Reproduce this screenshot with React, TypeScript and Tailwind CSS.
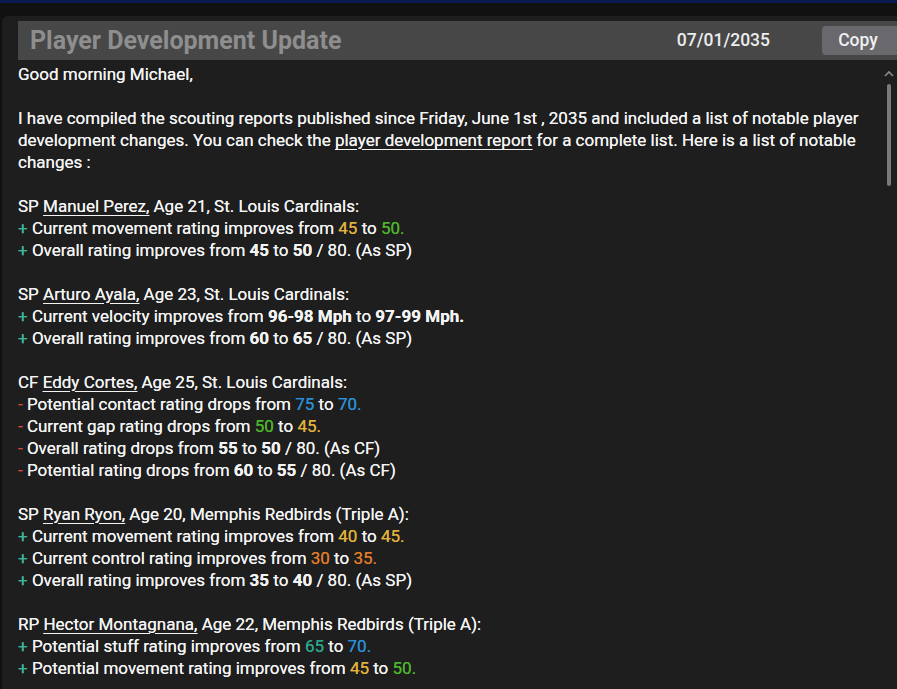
import React from "react";

type Seg = { t: string; c?: string; b?: boolean; u?: boolean };

const C = {
  yel: "text-[#e2b13c]",
  grn: "text-[#4db52b]",
  blu: "text-[#2b90d8]",
  org: "text-[#e27b27]",
  tea: "text-[#2ca68b]",
};

const plus = <span className="text-[#3fb39a]">+ </span>;
const minus = <span className="text-[#d9473a]">- </span>;

const Line = ({ sign, segs }: { sign?: "+" | "-"; segs: Seg[] }) => (
  <div className="h-[22px] whitespace-nowrap">
    {sign === "+" && plus}
    {sign === "-" && minus}
    {segs.map((s, i) => (
      <span
        key={i}
        className={`${s.c ?? ""} ${s.b ? "font-bold" : ""} ${s.u ? "underline underline-offset-[3px]" : ""}`}
      >
        {s.t}
      </span>
    ))}
  </div>
);

const Head = ({ pos, name, rest }: { pos: string; name: string; rest: string }) => (
  <Line segs={[{ t: pos + " " }, { t: name, u: true }, { t: rest }]} />
);

const Gap = () => <div className="h-[22px]" />;

const App = () => {
  return (
    <div className="w-[897px] h-[689px] bg-[#111111] overflow-hidden flex flex-col font-['Roboto',sans-serif]">
      <div className="h-[3px] bg-[#0b1a4e]" />
      <div className="h-[13px]" />
      <div className="relative flex-1 ml-[2px] rounded-tl-[6px] bg-[#1e1e1e] pl-[16px] pt-[5px]">
        <div className="h-[39px] bg-[#474747] flex items-center">
          <div className="pl-[12px] text-[25px] font-bold text-[#8e8e8e]">
            Player Development Update
          </div>
          <div className="ml-auto mr-[52px] text-[17.5px] font-medium text-[#ececec]">07/01/2035</div>
          <div className="w-[80px] h-[29px] mr-[-5px] rounded-[4px] bg-[#68686d] flex items-center justify-center text-[17.5px] font-medium text-[#f0f0f0] pr-[8px]">
            Copy
          </div>
        </div>

        <div className="pt-[3px] w-[860px] text-[17px] leading-[22px] text-[#f3f3f3] [text-shadow:0_0_0.4px_currentColor]">
          <div className="h-[22px]">Good morning Michael,</div>
          <Gap />
          <div>
            I have compiled the scouting reports published since Friday, June 1st , 2035 and included a list of notable
            player development changes. You can check the{" "}
            <span className="underline underline-offset-[3px]">player development report</span> for a complete list.
            Here is a list of notable changes :
          </div>
          <Gap />
          <Head pos="SP" name="Manuel Perez," rest=" Age 21, St. Louis Cardinals:" />
          <Line sign="+" segs={[{ t: "Current movement rating improves from " }, { t: "45", c: C.yel }, { t: " to " }, { t: "50.", c: C.grn }]} />
          <Line sign="+" segs={[{ t: "Overall rating improves from " }, { t: "45", b: true }, { t: " to " }, { t: "50", b: true }, { t: " / 80. (As SP)" }]} />
          <Gap />
          <Head pos="SP" name="Arturo Ayala," rest=" Age 23, St. Louis Cardinals:" />
          <Line sign="+" segs={[{ t: "Current velocity improves from " }, { t: "96-98 Mph", b: true }, { t: " to " }, { t: "97-99 Mph.", b: true }]} />
          <Line sign="+" segs={[{ t: "Overall rating improves from " }, { t: "60", b: true }, { t: " to " }, { t: "65", b: true }, { t: " / 80. (As SP)" }]} />
          <Gap />
          <Head pos="CF" name="Eddy Cortes," rest=" Age 25, St. Louis Cardinals:" />
          <Line sign="-" segs={[{ t: "Potential contact rating drops from " }, { t: "75", c: C.blu }, { t: " to " }, { t: "70.", c: C.blu }]} />
          <Line sign="-" segs={[{ t: "Current gap rating drops from " }, { t: "50", c: C.grn }, { t: " to " }, { t: "45.", c: C.yel }]} />
          <Line sign="-" segs={[{ t: "Overall rating drops from " }, { t: "55", b: true }, { t: " to " }, { t: "50", b: true }, { t: " / 80. (As CF)" }]} />
          <Line sign="-" segs={[{ t: "Potential rating drops from " }, { t: "60", b: true }, { t: " to " }, { t: "55", b: true }, { t: " / 80. (As CF)" }]} />
          <Gap />
          <Head pos="SP" name="Ryan Ryon," rest=" Age 20, Memphis Redbirds (Triple A):" />
          <Line sign="+" segs={[{ t: "Current movement rating improves from " }, { t: "40", c: C.yel }, { t: " to " }, { t: "45.", c: C.yel }]} />
          <Line sign="+" segs={[{ t: "Current control rating improves from " }, { t: "30", c: C.org }, { t: " to " }, { t: "35.", c: C.org }]} />
          <Line sign="+" segs={[{ t: "Overall rating improves from " }, { t: "35", b: true }, { t: " to " }, { t: "40", b: true }, { t: " / 80. (As SP)" }]} />
          <Gap />
          <Head pos="RP" name="Hector Montagnana," rest=" Age 22, Memphis Redbirds (Triple A):" />
          <Line sign="+" segs={[{ t: "Potential stuff rating improves from " }, { t: "65", c: C.tea }, { t: " to " }, { t: "70.", c: C.blu }]} />
          <Line sign="+" segs={[{ t: "Potential movement rating improves from " }, { t: "45", c: C.yel }, { t: " to " }, { t: "50.", c: C.grn }]} />
        </div>

        {/* scrollbar */}
        <div className="absolute right-[3px] top-[54px] flex flex-col items-center w-[10px]">
          <svg width="10" height="7" viewBox="0 0 10 7">
            <path d="M1 6 L5 2 L9 6" stroke="#8a8a8a" strokeWidth="1.6" fill="none" />
          </svg>
          <div className="mt-[7px] w-[4px] h-[102px] rounded-full bg-[#7a7a7a]" />
        </div>
      </div>
    </div>
  );
};

export default App;
